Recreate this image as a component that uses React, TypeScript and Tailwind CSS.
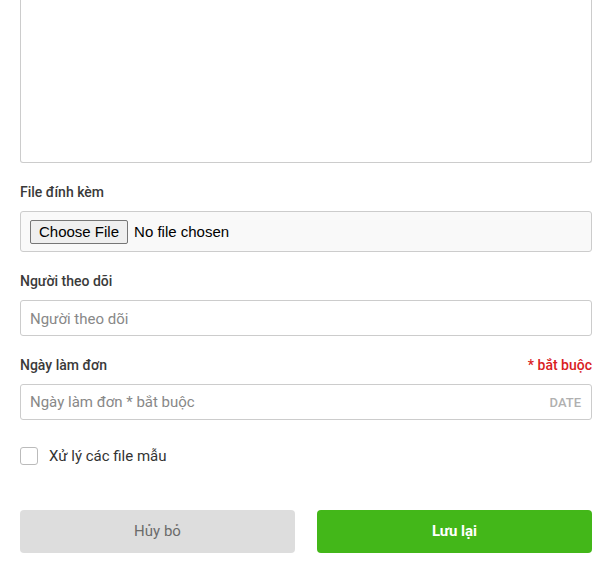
export default function App() {
	return (
		<div className="min-h-screen bg-white px-5 font-['Roboto',sans-serif] text-[#333]">
			<textarea className="block h-[163px] w-full resize-none rounded-b-[3px] border border-t-0 border-[#cccccc] outline-none" />

			<div className="mt-[19px] mb-[9px] text-[14px] leading-5 font-medium text-[#3a3a3a]">File đính kèm</div>
			<div className="flex h-[41px] items-center rounded-[3px] border border-[#cccccc] bg-[#f9f9f9] px-[9px]">
				<input
					type="file"
					className="font-['Liberation_Sans',Arial,sans-serif] text-[15px] text-black file:mr-[6px] file:h-[24px] file:rounded-[2px] file:border file:border-solid file:border-[#767676] file:bg-[#efefef] file:px-[8px] file:font-['Liberation_Sans',Arial,sans-serif] file:text-[15px] file:text-black"
				/>
			</div>

			<div className="mt-[19px] mb-[9px] text-[14px] leading-5 font-medium text-[#3a3a3a]">Người theo dõi</div>
			<input
				type="text"
				placeholder="Người theo dõi"
				className="block h-[36px] w-full rounded-[3px] border border-[#cccccc] px-[9px] pt-[1px] text-[15px] outline-none placeholder:text-[#888]"
			/>

			<div className="mt-[19px] mb-[9px] flex items-center justify-between text-[14px] leading-5 font-medium">
				<span className="text-[#3a3a3a]">Ngày làm đơn</span>
				<span className="text-[#d9211e]">* bắt buộc</span>
			</div>
			<div className="flex h-[36px] items-center rounded-[3px] border border-[#cccccc] pt-[1px] pr-[10px] pl-[9px]">
				<input
					type="text"
					placeholder="Ngày làm đơn * bắt buộc"
					className="min-w-0 flex-1 text-[15px] outline-none placeholder:text-[#888]"
				/>
				<span className="text-[13px] font-medium text-[#b0b0b0]">DATE</span>
			</div>

			<label className="mt-[26px] flex items-center gap-[11px] text-[15px] leading-5 text-[#333]">
				<span className="h-[18px] w-[18px] rounded-[3px] border border-[#bbbbbb] bg-white" />
				Xử lý các file mẫu
			</label>

			<div className="mt-[44px] grid grid-cols-2 gap-[22px]">
				<button className="h-[43px] rounded-[4px] bg-[#dddddd] text-[15px] text-[#6b6b6b]">Hủy bỏ</button>
				<button className="h-[43px] rounded-[4px] bg-[#43b719] text-[15px] font-bold text-white">Lưu lại</button>
			</div>
		</div>
	);
}
